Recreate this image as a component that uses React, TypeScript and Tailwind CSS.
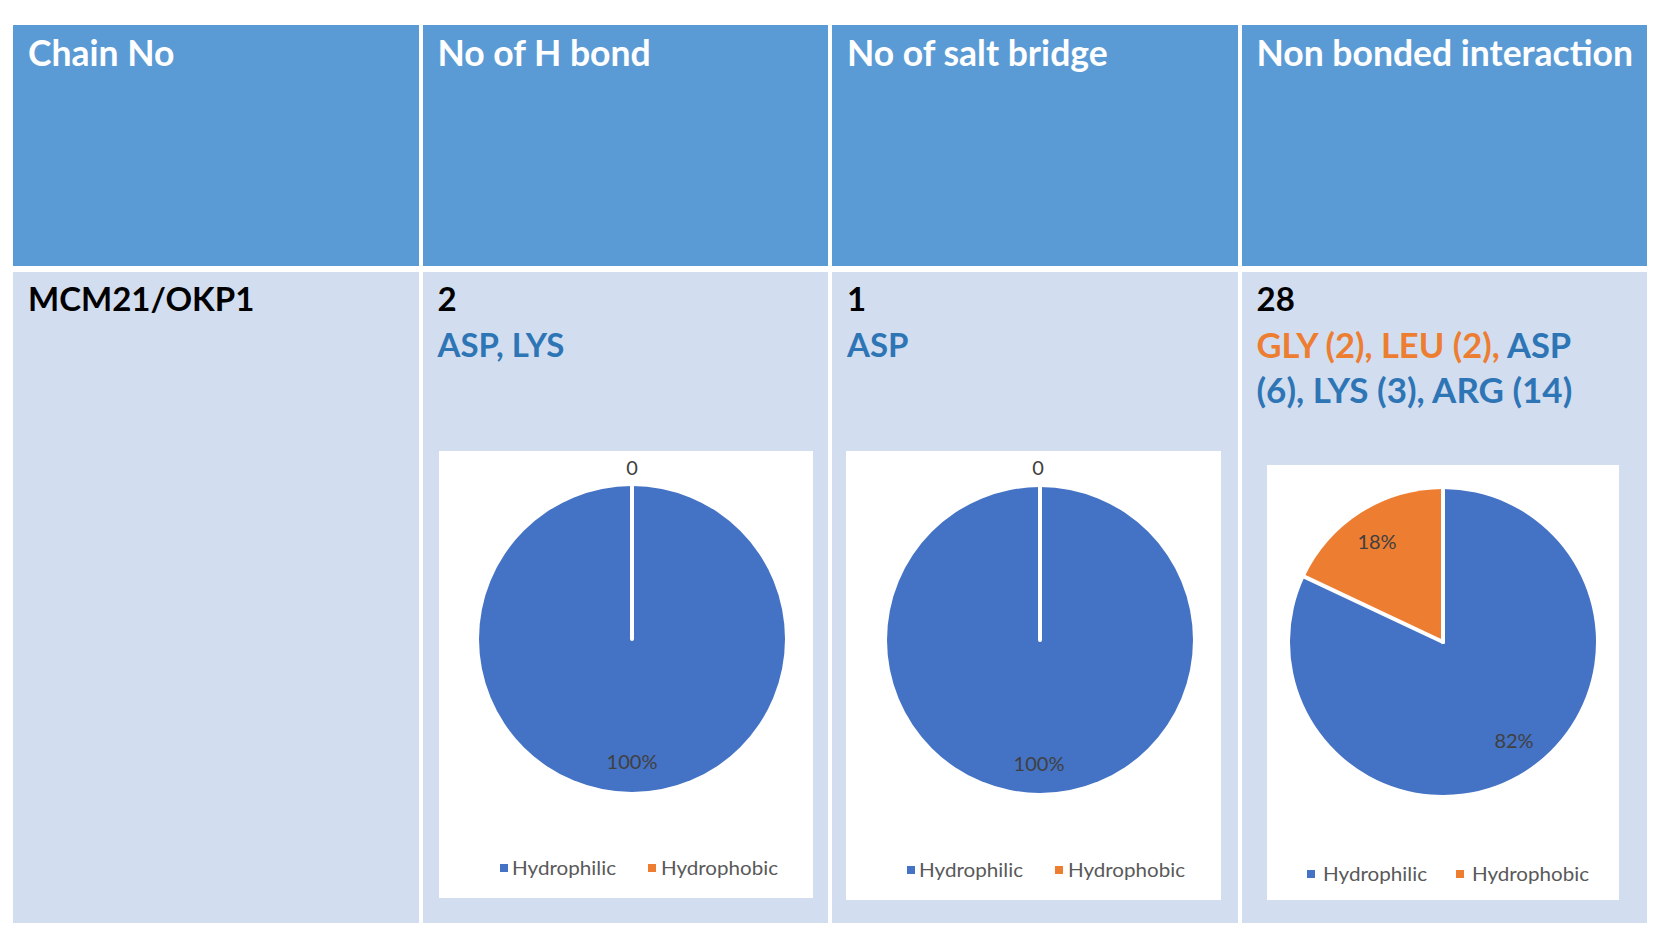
import React from "react";

const BLUE = "#4472c4";
const ORANGE = "#ed7d31";
const CHART_FONT = "Lato, 'Liberation Sans', sans-serif";

type Slice = { value: number; color: string };

interface PieCardProps {
  width: number;
  height: number;
  cx: number;
  cy: number;
  r: number;
  slices: Slice[];
  labels: { text: string; x: number; y: number }[];
  legendY: number;
  legendX: [number, number, number, number];
  className?: string;
}

// point on circle, angle in degrees clockwise from 12 o'clock
function pt(cx: number, cy: number, r: number, deg: number) {
  const a = (deg * Math.PI) / 180;
  return { x: cx + r * Math.sin(a), y: cy - r * Math.cos(a) };
}

function PieCard({ width, height, cx, cy, r, slices, labels, legendY, legendX, className }: PieCardProps) {
  const total = slices.reduce((s, x) => s + x.value, 0);
  let start = 0;
  const paths: React.ReactNode[] = [];
  const edges: number[] = [0];

  slices.forEach((s, i) => {
    const sweep = (s.value / total) * 360;
    if (sweep >= 359.99) {
      paths.push(<circle key={i} cx={cx} cy={cy} r={r} fill={s.color} />);
    } else if (sweep > 0) {
      const a = pt(cx, cy, r, start);
      const b = pt(cx, cy, r, start + sweep);
      const large = sweep > 180 ? 1 : 0;
      paths.push(
        <path
          key={i}
          d={`M${cx},${cy} L${a.x},${a.y} A${r},${r} 0 ${large} 1 ${b.x},${b.y} Z`}
          fill={s.color}
        />
      );
      edges.push(start + sweep);
    }
    start += sweep;
  });

  return (
    <div className={`bg-white font-normal ${className ?? ""}`} style={{ width, height }}>
      <svg width={width} height={height} viewBox={`0 0 ${width} ${height}`} fontWeight={400}>
        {paths}
        {edges.map((deg, i) => {
          const p = pt(cx, cy, r + 1, deg);
          return (
            <line
              key={i}
              x1={cx}
              y1={cy}
              x2={p.x}
              y2={p.y}
              stroke="#fff"
              strokeWidth={4}
              strokeLinecap="round"
            />
          );
        })}
        {labels.map((l, i) => (
          <text key={i} x={l.x} y={l.y} textAnchor="middle" fontSize={20} fill="#404040" fontFamily={CHART_FONT}>
            {l.text}
          </text>
        ))}
        <rect x={legendX[0]} y={legendY - 4} width={8} height={8} fill={BLUE} />
        <text
          x={legendX[1]}
          y={legendY + 7}
          fontSize={20}
          fill="#595959"
          fontFamily={CHART_FONT}
          textLength={104}
          lengthAdjust="spacingAndGlyphs"
        >
          Hydrophilic
        </text>
        <rect x={legendX[2]} y={legendY - 4} width={8} height={8} fill={ORANGE} />
        <text
          x={legendX[3]}
          y={legendY + 7}
          fontSize={20}
          fill="#595959"
          fontFamily={CHART_FONT}
          textLength={117}
          lengthAdjust="spacingAndGlyphs"
        >
          Hydrophobic
        </text>
      </svg>
    </div>
  );
}

const headers = ["Chain No", "No of H bond", "No of salt bridge", "Non bonded interaction"];

export default function App() {
  return (
    <div className="min-h-screen bg-white pl-[13px] pt-[25px] font-['Lato','Liberation_Sans',sans-serif]">
      <div className="grid w-[1634px] grid-cols-4 gap-x-[4px] gap-y-[6px]">
        {headers.map((h) => (
          <div
            key={h}
            className="h-[241px] bg-[#5b9bd5] px-[15px] pt-[7px] text-[35.5px] font-bold leading-[1.2] whitespace-nowrap text-white"
          >
            {h}
          </div>
        ))}

        {/* body row */}
        <div className="h-[651px] bg-[#d2deef] px-[15px] pt-[4px] text-[33px] font-bold leading-[45.5px] text-black">
          MCM21/OKP1
        </div>

        <div className="flex h-[651px] flex-col bg-[#d2deef] px-[15px] pt-[4px] text-[33px] font-bold leading-[45.5px]">
          <div className="text-black">2</div>
          <div className="text-[#2e75b6]">ASP, LYS</div>
          <PieCard
            className="mt-[84px] ml-[1px]"
            width={374}
            height={447}
            cx={193}
            cy={188}
            r={153}
            slices={[
              { value: 100, color: BLUE },
              { value: 0, color: ORANGE },
            ]}
            labels={[
              { text: "0", x: 193, y: 24 },
              { text: "100%", x: 193, y: 318 },
            ]}
            legendY={417}
            legendX={[61, 73, 209, 222]}
          />
        </div>

        <div className="flex h-[651px] flex-col bg-[#d2deef] px-[15px] pt-[4px] text-[33px] font-bold leading-[45.5px]">
          <div className="text-black">1</div>
          <div className="text-[#2e75b6]">ASP</div>
          <PieCard
            className="mt-[84px] -ml-[1px]"
            width={375}
            height={449}
            cx={194}
            cy={189}
            r={153}
            slices={[
              { value: 100, color: BLUE },
              { value: 0, color: ORANGE },
            ]}
            labels={[
              { text: "0", x: 192, y: 24 },
              { text: "100%", x: 193, y: 320 },
            ]}
            legendY={419}
            legendX={[61, 73, 209, 222]}
          />
        </div>

        <div className="flex h-[651px] flex-col bg-[#d2deef] px-[15px] pt-[4px] text-[34.5px] font-bold leading-[45.5px] whitespace-nowrap">
          <div className="text-[33px] text-black">28</div>
          <div>
            <span className="text-[#ed7d31]">GLY (2), LEU (2),</span>{" "}
            <span className="text-[#2e75b6]">ASP</span>
          </div>
          <div className="text-[35px] text-[#2e75b6]">(6), LYS (3), ARG (14)</div>
          <PieCard
            className="mt-[52px] ml-[10px]"
            width={352}
            height={435}
            cx={176}
            cy={177}
            r={153}
            slices={[
              { value: 82, color: BLUE },
              { value: 18, color: ORANGE },
            ]}
            labels={[
              { text: "18%", x: 110, y: 84 },
              { text: "82%", x: 247, y: 283 },
            ]}
            legendY={409}
            legendX={[40, 56, 189, 205]}
          />
        </div>
      </div>
    </div>
  );
}
